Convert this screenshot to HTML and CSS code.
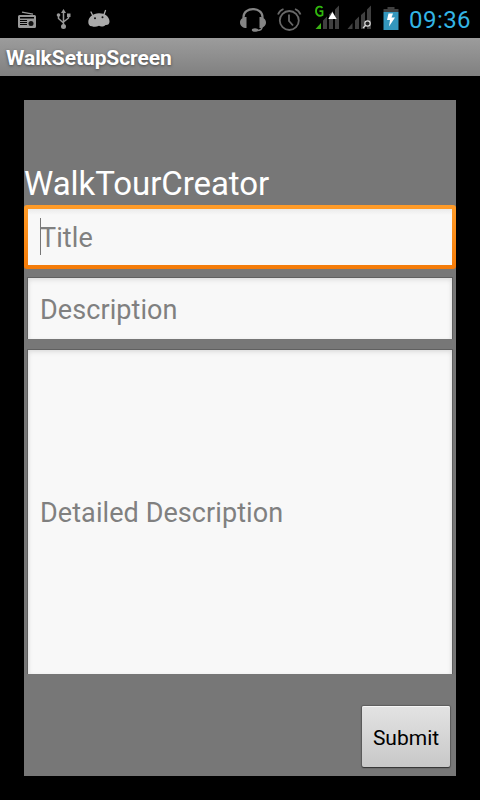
FILE: index.html
```
<!DOCTYPE html>
<html lang="en">
<head>
<meta charset="utf-8">
<title>WalkSetupScreen</title>
<link rel="stylesheet" href="styles.css">
</head>
<body>
<header class="status">
  <div class="notices">
    <svg width="20" height="38" viewBox="17 0 20 38"><path d="M22 12.200l11 2" stroke="#999" stroke-width="1.200"/><path fill="#999" fill-rule="evenodd" d="M19.500 15h15q1.500 0 1.500 1.500v10q0 1.500-1.500 1.500h-15q-1.500 0-1.500-1.500v-10q0-1.500 1.500-1.500zM20 17v1.500h14V17zM20 20v1h7v-1zM20 22v1h7v-1zM20 24v1h7v-1z"/><circle cx="31" cy="23.500" r="2.500" fill="#111"/></svg>
    <svg width="16" height="38" viewBox="56 0 16 38" fill="none" stroke="#999" stroke-width="1.500"><path d="M63.500 12v14M58.500 15v3.500l5 4.500M68.500 15v3l-5 4"/><path fill="#999" stroke="none" d="M63.500 9l2.500 4h-5zM67 13.500h3.500V17H67z"/><circle cx="58.500" cy="15" r="1.800" fill="#999" stroke="none"/><circle cx="63.500" cy="26.500" r="2.500" fill="#999" stroke="none"/></svg>
    <svg width="24" height="38" viewBox="87 0 24 38"><path d="M91 12l2 4M105.500 10.500l-1.500 4" stroke="#aaa" stroke-width="1.300" stroke-linecap="round"/><path fill="#aaa" d="M88.300 22c0-5 5-8.500 10.500-8.700 5.700-.2 10.700 3.200 10.700 8.200 0 2.500-1.500 3.700-4 3.500-1.500 1.500-4.500 2.300-6.500.8-2.500 1.400-5.500 1.200-7 .4-2.500.1-3.700-1.700-3.700-4.200z"/><circle cx="95" cy="18.300" r="1" fill="#111"/><circle cx="102.500" cy="17.300" r="1" fill="#111"/></svg>
  </div>
  <div class="system">
    <svg width="28" height="38" viewBox="239 0 28 38"><path d="M243.500 18v-1c0-10.500 19-10.500 19 0v1" fill="none" stroke="#858585" stroke-width="2.200"/><path fill="#858585" d="M246.500 17v11c-3.500 0-6.500-2-6.500-5.500s3-5.500 6.500-5.500zM259.500 17v11c3.500 0 6.500-2 6.500-5.500s-3-5.500-6.500-5.500z"/><path d="M262 27c0 2.500-2 3.500-5 3.500" fill="none" stroke="#858585" stroke-width="1.500"/><ellipse cx="255" cy="30" rx="3.200" ry="1.800" fill="#858585"/></svg>
    <svg width="26" height="38" viewBox="276 0 26 38" fill="none" stroke="#686868" stroke-width="1.800"><circle cx="289.300" cy="20.500" r="9.500"/><path d="M289 14.500v6.500l4 4.500M278 14.500q1.500-4 5.500-5.500M295 9q4 1.500 5.500 5.500"/></svg>
    <svg width="25" height="38" viewBox="315 0 25 38"><path fill="#404040" d="M323 20.500l4-4V29h-4zM329 14.500l4-3.500v18h-4zM335 9.500l4-4V29h-4z"/><path fill="#3ab015" d="M315.500 29l5.500-6v6z"/><path fill="#fff" d="M332.500 12l4.200 7h-8.400z"/><path d="M322.500 7.800c-2.500-2.300-6.500-1.300-6.500 3.200 0 4.500 3.800 5.700 6.500 4v-3.800h-3" fill="none" stroke="#30b80d" stroke-width="1.800"/></svg>
    <svg width="25" height="38" viewBox="347 0 25 38"><path fill="#404040" d="M347.500 29l5-6v6zM355 20.500l4-4V29h-4zM361 15l4-3.500V29h-4zM367 9.500l4-4V29h-4z"/><circle cx="367.500" cy="23.500" r="2.700" fill="#222" stroke="#ddd" stroke-width="1.200"/><path d="M365.500 25.500l-2.500 2.500" stroke="#ddd" stroke-width="1.300"/></svg>
    <svg width="16" height="38" viewBox="383 0 16 38"><path fill="#404040" d="M387.500 7h7v2h4v3h-15V9h4z"/><path fill="#3497bd" d="M383.500 12h15v18h-15z"/><path fill="#fff" d="M388.500 13.500h4.500l-1.500 4h3.500l-6 9 1-6.500h-3z"/></svg>
    <span class="clock">09:36</span>
  </div>
</header>
<div class="titlebar">WalkSetupScreen</div>
<main class="panel">
  <h1 class="heading">WalkTourCreator</h1>
  <div class="field focused"><i class="caret"></i><span class="hint">Title</span></div>
  <div class="field"><span class="hint">Description</span></div>
  <div class="field tall"><span class="hint">Detailed Description</span></div>
  <button class="submit">Submit</button>
</main>
</body>
</html>
```
FILE: styles.css
```
* { box-sizing: border-box; }
body { margin: 0; background: #000; font-family: Roboto, sans-serif; width: 480px; height: 800px; overflow: hidden; }
svg { display: block; }
.status { height: 38px; display: flex; justify-content: space-between; padding: 0 9px 0 17px; }
.notices { display: flex; }
.notices svg + svg { margin-left: 19px; }
.notices svg:last-child { margin-left: 15px; }
.system { display: flex; }
.system svg:nth-child(2) { margin-left: 9px; }
.system svg:nth-child(3) { margin-left: 13px; }
.system svg:nth-child(4) { margin-left: 7px; }
.system svg:nth-child(5) { margin-left: 11px; }
.clock { width: 62px; margin-left: 10px; color: #33b5e5; font-size: 24px; letter-spacing: 0.45px; line-height: 40px; white-space: nowrap; }
.titlebar { height: 38px; padding-left: 6px; background: linear-gradient(#9c9c9c, #808080); color: #fff; font-size: 21px; font-weight: 700; letter-spacing: -0.07px; line-height: 41px; text-shadow: 0 1px 3px #444; }
.panel { margin: 24px 24px 0; height: 676px; padding-top: 64px; background: #777; display: flex; flex-direction: column; }
.heading { margin: 0; height: 41px; font-size: 33px; font-weight: 400; letter-spacing: -0.06px; line-height: 39px; color: #fff; white-space: nowrap; }
.field { height: 62px; margin: 0 3px 10px; padding-left: 12px; display: flex; align-items: center; background: #f8f8f8; border: solid #606060; border-width: 1px 1px 0; box-shadow: inset 0 4px 5px -2px #ddd, inset 3px 0 4px -2px #e4e4e4, inset -3px 0 4px -2px #e4e4e4; }
.focused { height: 64px; margin: 0 0 8px; padding-left: 16px; border: 0; border-radius: 3px; background: linear-gradient(#ebebeb, #f8f8f8 6px) 4px 4px / calc(100% - 8px) calc(100% - 8px) no-repeat, linear-gradient(#ff9c29, #f47b08); box-shadow: none; }
.tall { height: 325px; margin-bottom: 0; }
.caret { width: 1px; height: 37px; margin: -2px -1px 0 0; background: #777; }
.hint { padding-top: 2px; font-size: 27px; letter-spacing: 0.08px; line-height: 32px; color: #808080; white-space: nowrap; }
.submit { align-self: flex-end; width: 88px; height: 61px; margin: 32px 6px 0 0; padding: 3px 0 0; border: 0; border-radius: 2px; background: linear-gradient(#e3e3e3, #c8c8c8); box-shadow: inset 0 1px #f5f5f5, 0 1px 1px #333, 0 0 1px 1px #5c5c5c; color: #000; font: 21px Roboto, sans-serif; }
```
